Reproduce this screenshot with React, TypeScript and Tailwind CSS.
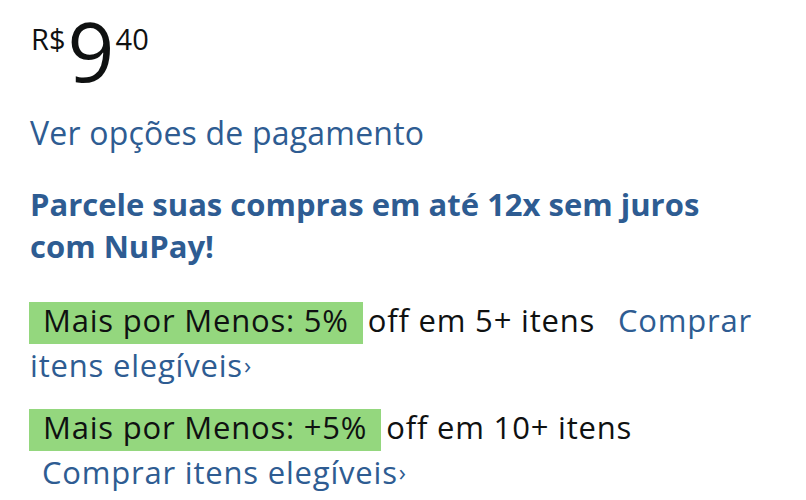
export default function App() {
  return (
    <div className="w-[806px] h-[500px] bg-white overflow-hidden pl-[30px] pr-[30px] font-['Open_Sans',sans-serif] text-[#0f1111]">
      <div className="flex items-start pt-[9px]">
        <span className="text-[29px] leading-[29px] mt-[15px] ml-[1px]">R$</span>
        <span className="text-[82px] leading-[82px] ml-[2px]">9</span>
        <span className="text-[29px] leading-[29px] mt-[15px] ml-[1px] tracking-[0.3px]">40</span>
      </div>
      <div className="mt-[22px] text-[32px] leading-[40px] tracking-[0.2px] text-[#2e5c92]">Ver opções de pagamento</div>
      <div className="mt-[30px] pr-[40px] text-[31px] leading-[42px] font-bold text-[#2e5c92]">
        Parcele suas compras em até 12x sem juros com NuPay!
      </div>
      <div className="mt-[32px] text-[31px] leading-[42px] tracking-[0.8px]">
        <span className="inline-block h-[42px] leading-[36px] align-baseline bg-[#94d77e] pl-[14px] pr-[14px] -ml-[1px]">Mais por Menos: 5%</span>
        <span className="ml-[5px]">off em 5+ itens</span>{' '}
        <span className="ml-[14px] text-[#2e5c92]">Comprar itens elegíveis<span className="text-[24px] ml-[1px] align-[3px]">›</span></span>
      </div>
      <div className="mt-[20px] text-[31px] leading-[42px] tracking-[0.8px]">
        <span className="inline-block h-[42px] leading-[36px] align-baseline bg-[#94d77e] pl-[14px] pr-[14px] -ml-[1px]">Mais por Menos: +5%</span>
        <span className="ml-[5px]">off em 10+ itens</span>{' '}
        <span className="ml-[12px] text-[#2e5c92]">Comprar itens elegíveis<span className="text-[24px] ml-[1px] align-[3px]">›</span></span>
      </div>
    </div>
  );
}
